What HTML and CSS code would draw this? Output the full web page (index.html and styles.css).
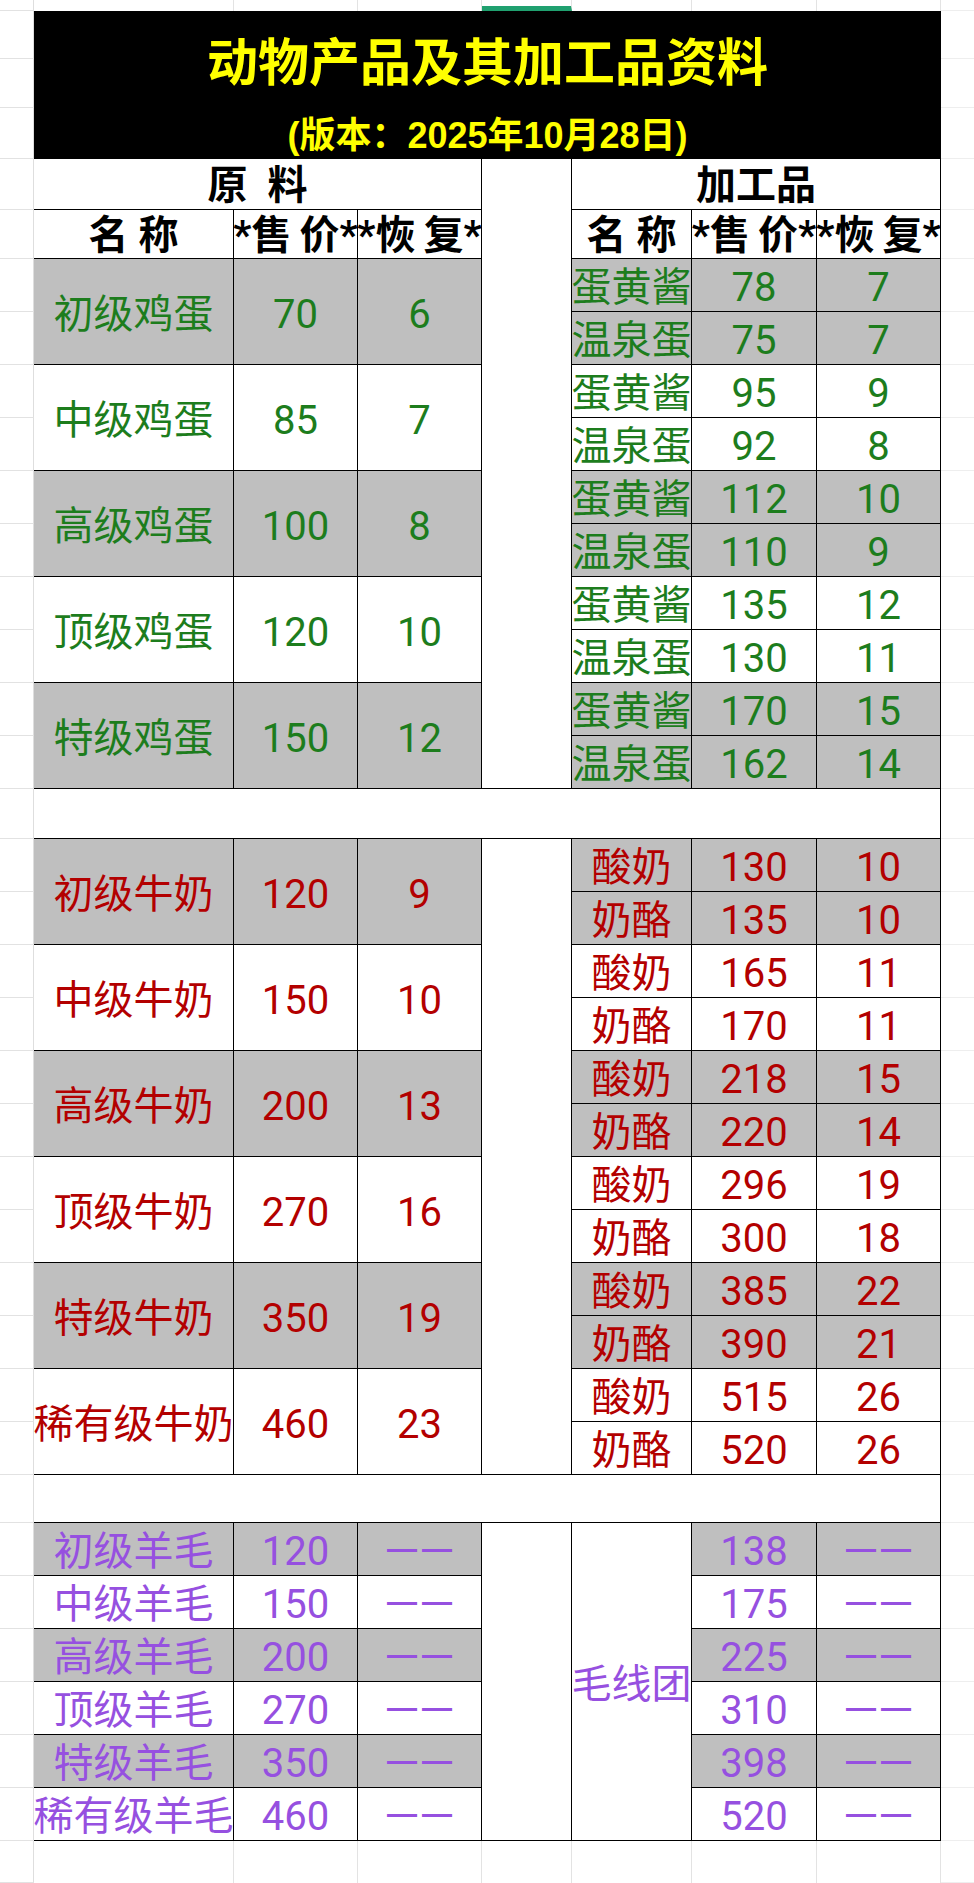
FILE: index.html
```html
<!DOCTYPE html>
<html lang="zh-CN">
<head>
<meta charset="utf-8">
<title>动物产品及其加工品资料</title>
<link rel="stylesheet" href="styles.css">
</head>
<body>
<div class="sheet">
  <!-- top strip -->
  <div class="m0"></div>
  <div class="tp ca"></div><div class="tp cb"></div><div class="tp cc"></div><div class="tp cd sel"></div>
  <div class="tp ce"></div><div class="tp cf"></div><div class="tp cg"></div>
  <div class="m9"></div>

  <!-- title -->
  <div class="m0"></div>
  <div class="title">
    <div class="title-main">动物产品及其加工品资料</div>
    <div class="title-sub">(版本：2025年10月28日)</div>
  </div>
  <div class="m9"></div>
  <div class="m0"></div><div class="m9"></div>
  <div class="m0"></div><div class="m9"></div>

  <!-- headers -->
  <div class="m0"></div>
  <div class="c hd hl pre">原  料</div>
  <div class="sp cd s2 nb"></div>
  <div class="c hd hr">加工品</div>
  <div class="m9"></div>

  <div class="m0"></div>
  <div class="c hd ca">名 称</div>
  <div class="c hd cb ast">*售 价*</div>
  <div class="c hd cc ast">*恢 复*</div>
  <div class="c hd ce">名 称</div>
  <div class="c hd cf ast">*售 价*</div>
  <div class="c hd cg ast">*恢 复*</div>
  <div class="m9"></div>

  <!-- eggs -->
  <div class="m0"></div>
  <div class="c ca s2 g eg">初级鸡蛋</div><div class="c cb s2 g eg">70</div><div class="c cc s2 g eg">6</div>
  <div class="sp cd s10"></div>
  <div class="c ce g eg">蛋黄酱</div><div class="c cf g eg">78</div><div class="c cg g eg">7</div>
  <div class="m9"></div>
  <div class="m0"></div>
  <div class="c ce g eg">温泉蛋</div><div class="c cf g eg">75</div><div class="c cg g eg">7</div>
  <div class="m9"></div>

  <div class="m0"></div>
  <div class="c ca s2 eg">中级鸡蛋</div><div class="c cb s2 eg">85</div><div class="c cc s2 eg">7</div>
  <div class="c ce eg">蛋黄酱</div><div class="c cf eg">95</div><div class="c cg eg">9</div>
  <div class="m9"></div>
  <div class="m0"></div>
  <div class="c ce eg">温泉蛋</div><div class="c cf eg">92</div><div class="c cg eg">8</div>
  <div class="m9"></div>

  <div class="m0"></div>
  <div class="c ca s2 g eg">高级鸡蛋</div><div class="c cb s2 g eg">100</div><div class="c cc s2 g eg">8</div>
  <div class="c ce g eg">蛋黄酱</div><div class="c cf g eg">112</div><div class="c cg g eg">10</div>
  <div class="m9"></div>
  <div class="m0"></div>
  <div class="c ce g eg">温泉蛋</div><div class="c cf g eg">110</div><div class="c cg g eg">9</div>
  <div class="m9"></div>

  <div class="m0"></div>
  <div class="c ca s2 eg">顶级鸡蛋</div><div class="c cb s2 eg">120</div><div class="c cc s2 eg">10</div>
  <div class="c ce eg">蛋黄酱</div><div class="c cf eg">135</div><div class="c cg eg">12</div>
  <div class="m9"></div>
  <div class="m0"></div>
  <div class="c ce eg">温泉蛋</div><div class="c cf eg">130</div><div class="c cg eg">11</div>
  <div class="m9"></div>

  <div class="m0"></div>
  <div class="c ca s2 g eg">特级鸡蛋</div><div class="c cb s2 g eg">150</div><div class="c cc s2 g eg">12</div>
  <div class="c ce g eg">蛋黄酱</div><div class="c cf g eg">170</div><div class="c cg g eg">15</div>
  <div class="m9"></div>
  <div class="m0"></div>
  <div class="c ce g eg">温泉蛋</div><div class="c cf g eg">162</div><div class="c cg g eg">14</div>
  <div class="m9"></div>

  <!-- gap -->
  <div class="m0"></div><div class="c gap"></div><div class="m9"></div>

  <!-- milk -->
  <div class="m0"></div>
  <div class="c ca s2 g mk">初级牛奶</div><div class="c cb s2 g mk">120</div><div class="c cc s2 g mk">9</div>
  <div class="sp cd s12"></div>
  <div class="c ce g mk">酸奶</div><div class="c cf g mk">130</div><div class="c cg g mk">10</div>
  <div class="m9"></div>
  <div class="m0"></div>
  <div class="c ce g mk">奶酪</div><div class="c cf g mk">135</div><div class="c cg g mk">10</div>
  <div class="m9"></div>

  <div class="m0"></div>
  <div class="c ca s2 mk">中级牛奶</div><div class="c cb s2 mk">150</div><div class="c cc s2 mk">10</div>
  <div class="c ce mk">酸奶</div><div class="c cf mk">165</div><div class="c cg mk">11</div>
  <div class="m9"></div>
  <div class="m0"></div>
  <div class="c ce mk">奶酪</div><div class="c cf mk">170</div><div class="c cg mk">11</div>
  <div class="m9"></div>

  <div class="m0"></div>
  <div class="c ca s2 g mk">高级牛奶</div><div class="c cb s2 g mk">200</div><div class="c cc s2 g mk">13</div>
  <div class="c ce g mk">酸奶</div><div class="c cf g mk">218</div><div class="c cg g mk">15</div>
  <div class="m9"></div>
  <div class="m0"></div>
  <div class="c ce g mk">奶酪</div><div class="c cf g mk">220</div><div class="c cg g mk">14</div>
  <div class="m9"></div>

  <div class="m0"></div>
  <div class="c ca s2 mk">顶级牛奶</div><div class="c cb s2 mk">270</div><div class="c cc s2 mk">16</div>
  <div class="c ce mk">酸奶</div><div class="c cf mk">296</div><div class="c cg mk">19</div>
  <div class="m9"></div>
  <div class="m0"></div>
  <div class="c ce mk">奶酪</div><div class="c cf mk">300</div><div class="c cg mk">18</div>
  <div class="m9"></div>

  <div class="m0"></div>
  <div class="c ca s2 g mk">特级牛奶</div><div class="c cb s2 g mk">350</div><div class="c cc s2 g mk">19</div>
  <div class="c ce g mk">酸奶</div><div class="c cf g mk">385</div><div class="c cg g mk">22</div>
  <div class="m9"></div>
  <div class="m0"></div>
  <div class="c ce g mk">奶酪</div><div class="c cf g mk">390</div><div class="c cg g mk">21</div>
  <div class="m9"></div>

  <div class="m0"></div>
  <div class="c ca s2 mk">稀有级牛奶</div><div class="c cb s2 mk">460</div><div class="c cc s2 mk">23</div>
  <div class="c ce mk">酸奶</div><div class="c cf mk">515</div><div class="c cg mk">26</div>
  <div class="m9"></div>
  <div class="m0"></div>
  <div class="c ce mk">奶酪</div><div class="c cf mk">520</div><div class="c cg mk">26</div>
  <div class="m9"></div>

  <!-- gap -->
  <div class="m0"></div><div class="c gap"></div><div class="m9"></div>

  <!-- wool -->
  <div class="m0"></div>
  <div class="c ca g wl">初级羊毛</div><div class="c cb g wl">120</div><div class="c cc g wl dash">——</div>
  <div class="sp cd s6"></div>
  <div class="c ce s6 wl">毛线团</div>
  <div class="c cf g wl">138</div><div class="c cg g wl dash">——</div>
  <div class="m9"></div>

  <div class="m0"></div>
  <div class="c ca wl">中级羊毛</div><div class="c cb wl">150</div><div class="c cc wl dash">——</div>
  <div class="c cf wl">175</div><div class="c cg wl dash">——</div>
  <div class="m9"></div>

  <div class="m0"></div>
  <div class="c ca g wl">高级羊毛</div><div class="c cb g wl">200</div><div class="c cc g wl dash">——</div>
  <div class="c cf g wl">225</div><div class="c cg g wl dash">——</div>
  <div class="m9"></div>

  <div class="m0"></div>
  <div class="c ca wl">顶级羊毛</div><div class="c cb wl">270</div><div class="c cc wl dash">——</div>
  <div class="c cf wl">310</div><div class="c cg wl dash">——</div>
  <div class="m9"></div>

  <div class="m0"></div>
  <div class="c ca g wl">特级羊毛</div><div class="c cb g wl">350</div><div class="c cc g wl dash">——</div>
  <div class="c cf g wl">398</div><div class="c cg g wl dash">——</div>
  <div class="m9"></div>

  <div class="m0"></div>
  <div class="c ca wl">稀有级羊毛</div><div class="c cb wl">460</div><div class="c cc wl dash">——</div>
  <div class="c cf wl">520</div><div class="c cg wl dash">——</div>
  <div class="m9"></div>

  <!-- bottom strip -->
  <div class="m0"></div>
  <div class="bt ca"></div><div class="bt cb"></div><div class="bt cc"></div><div class="bt cd"></div>
  <div class="bt ce"></div><div class="bt cf"></div><div class="bt cg"></div>
  <div class="m9"></div>
</div>
</body>
</html>
```

FILE: styles.css
```css
html, body {
  margin: 0;
  padding: 0;
  background: #ffffff;
}

.sheet {
  display: grid;
  width: 974px;
  grid-template-columns: 34px 200px 124px 124px 90px 120px 125px 124px 33px;
  grid-template-rows:
    11px 48px 49px 51px
    51px 49px
    repeat(10, 53px)
    50px
    repeat(12, 53px)
    48px
    repeat(6, 53px)
    42px;
  font-family: Roboto, "Noto Sans CJK SC", sans-serif;
  font-size: 40px;
  background: #ffffff;
}

/* spreadsheet margins */
.m0 {
  grid-column: 1;
  border-right: 1px solid #dedede;
  border-bottom: 1px solid #e2e2e2;
}
.m9 {
  grid-column: 9;
  border-bottom: 1px solid #eeeeee;
}

.tp, .bt {
  border-right: 1px solid #e3e3e3;
}
.sel {
  border-bottom: 5px solid #20a06f;
}

/* columns */
.ca { grid-column: 2; }
.cb { grid-column: 3; }
.cc { grid-column: 4; }
.cd { grid-column: 5; }
.ce { grid-column: 6; }
.cf { grid-column: 7; }
.cg { grid-column: 8; }
.hl { grid-column: 2 / 5; }
.hr { grid-column: 6 / 9; }
.gap { grid-column: 2 / 9; }

/* row spans */
.s2 { grid-row: span 2; }
.s6 { grid-row: span 6; }
.s10 { grid-row: span 10; }
.s12 { grid-row: span 12; }

/* title block */
.title {
  grid-column: 2 / 9;
  grid-row: span 3;
  background: #000000;
  color: #ffff00;
  font-weight: 700;
  display: flex;
  flex-direction: column;
  align-items: center;
}
.title-main {
  height: 96px;
  line-height: 96px;
  font-size: 51px;
  font-family: "Noto Sans CJK SC", sans-serif;
}
.title-sub {
  height: 52px;
  line-height: 58px;
  font-size: 36px;
  font-family: "Liberation Sans", "Noto Sans CJK SC", sans-serif;
}

/* cells */
.c {
  display: flex;
  align-items: center;
  justify-content: center;
  background: #ffffff;
  border-right: 1px solid #000000;
  border-bottom: 1px solid #000000;
  white-space: nowrap;
  overflow: hidden;
  line-height: 1;
  padding-top: 6px;
}
.sp {
  background: #ffffff;
  border-right: 1px solid #000000;
  border-bottom: 1px solid #000000;
}
.sp.nb {
  border-bottom: none;
}
.g { background: #bfbfbf; }

.hd {
  color: #000000;
  font-weight: 700;
  padding-top: 4px;
}
.ast {
  word-spacing: -2px;
}
.pre { white-space: pre; }

.eg { color: #1d7d1d; }
.mk { color: #b30000; }
.wl { color: #9650e0; }

.c.dash {
  font-family: "Liberation Sans", sans-serif;
  font-weight: 700;
  font-size: 30px;
  letter-spacing: 5px;
  text-indent: 5px;
  padding-top: 0;
}
```
